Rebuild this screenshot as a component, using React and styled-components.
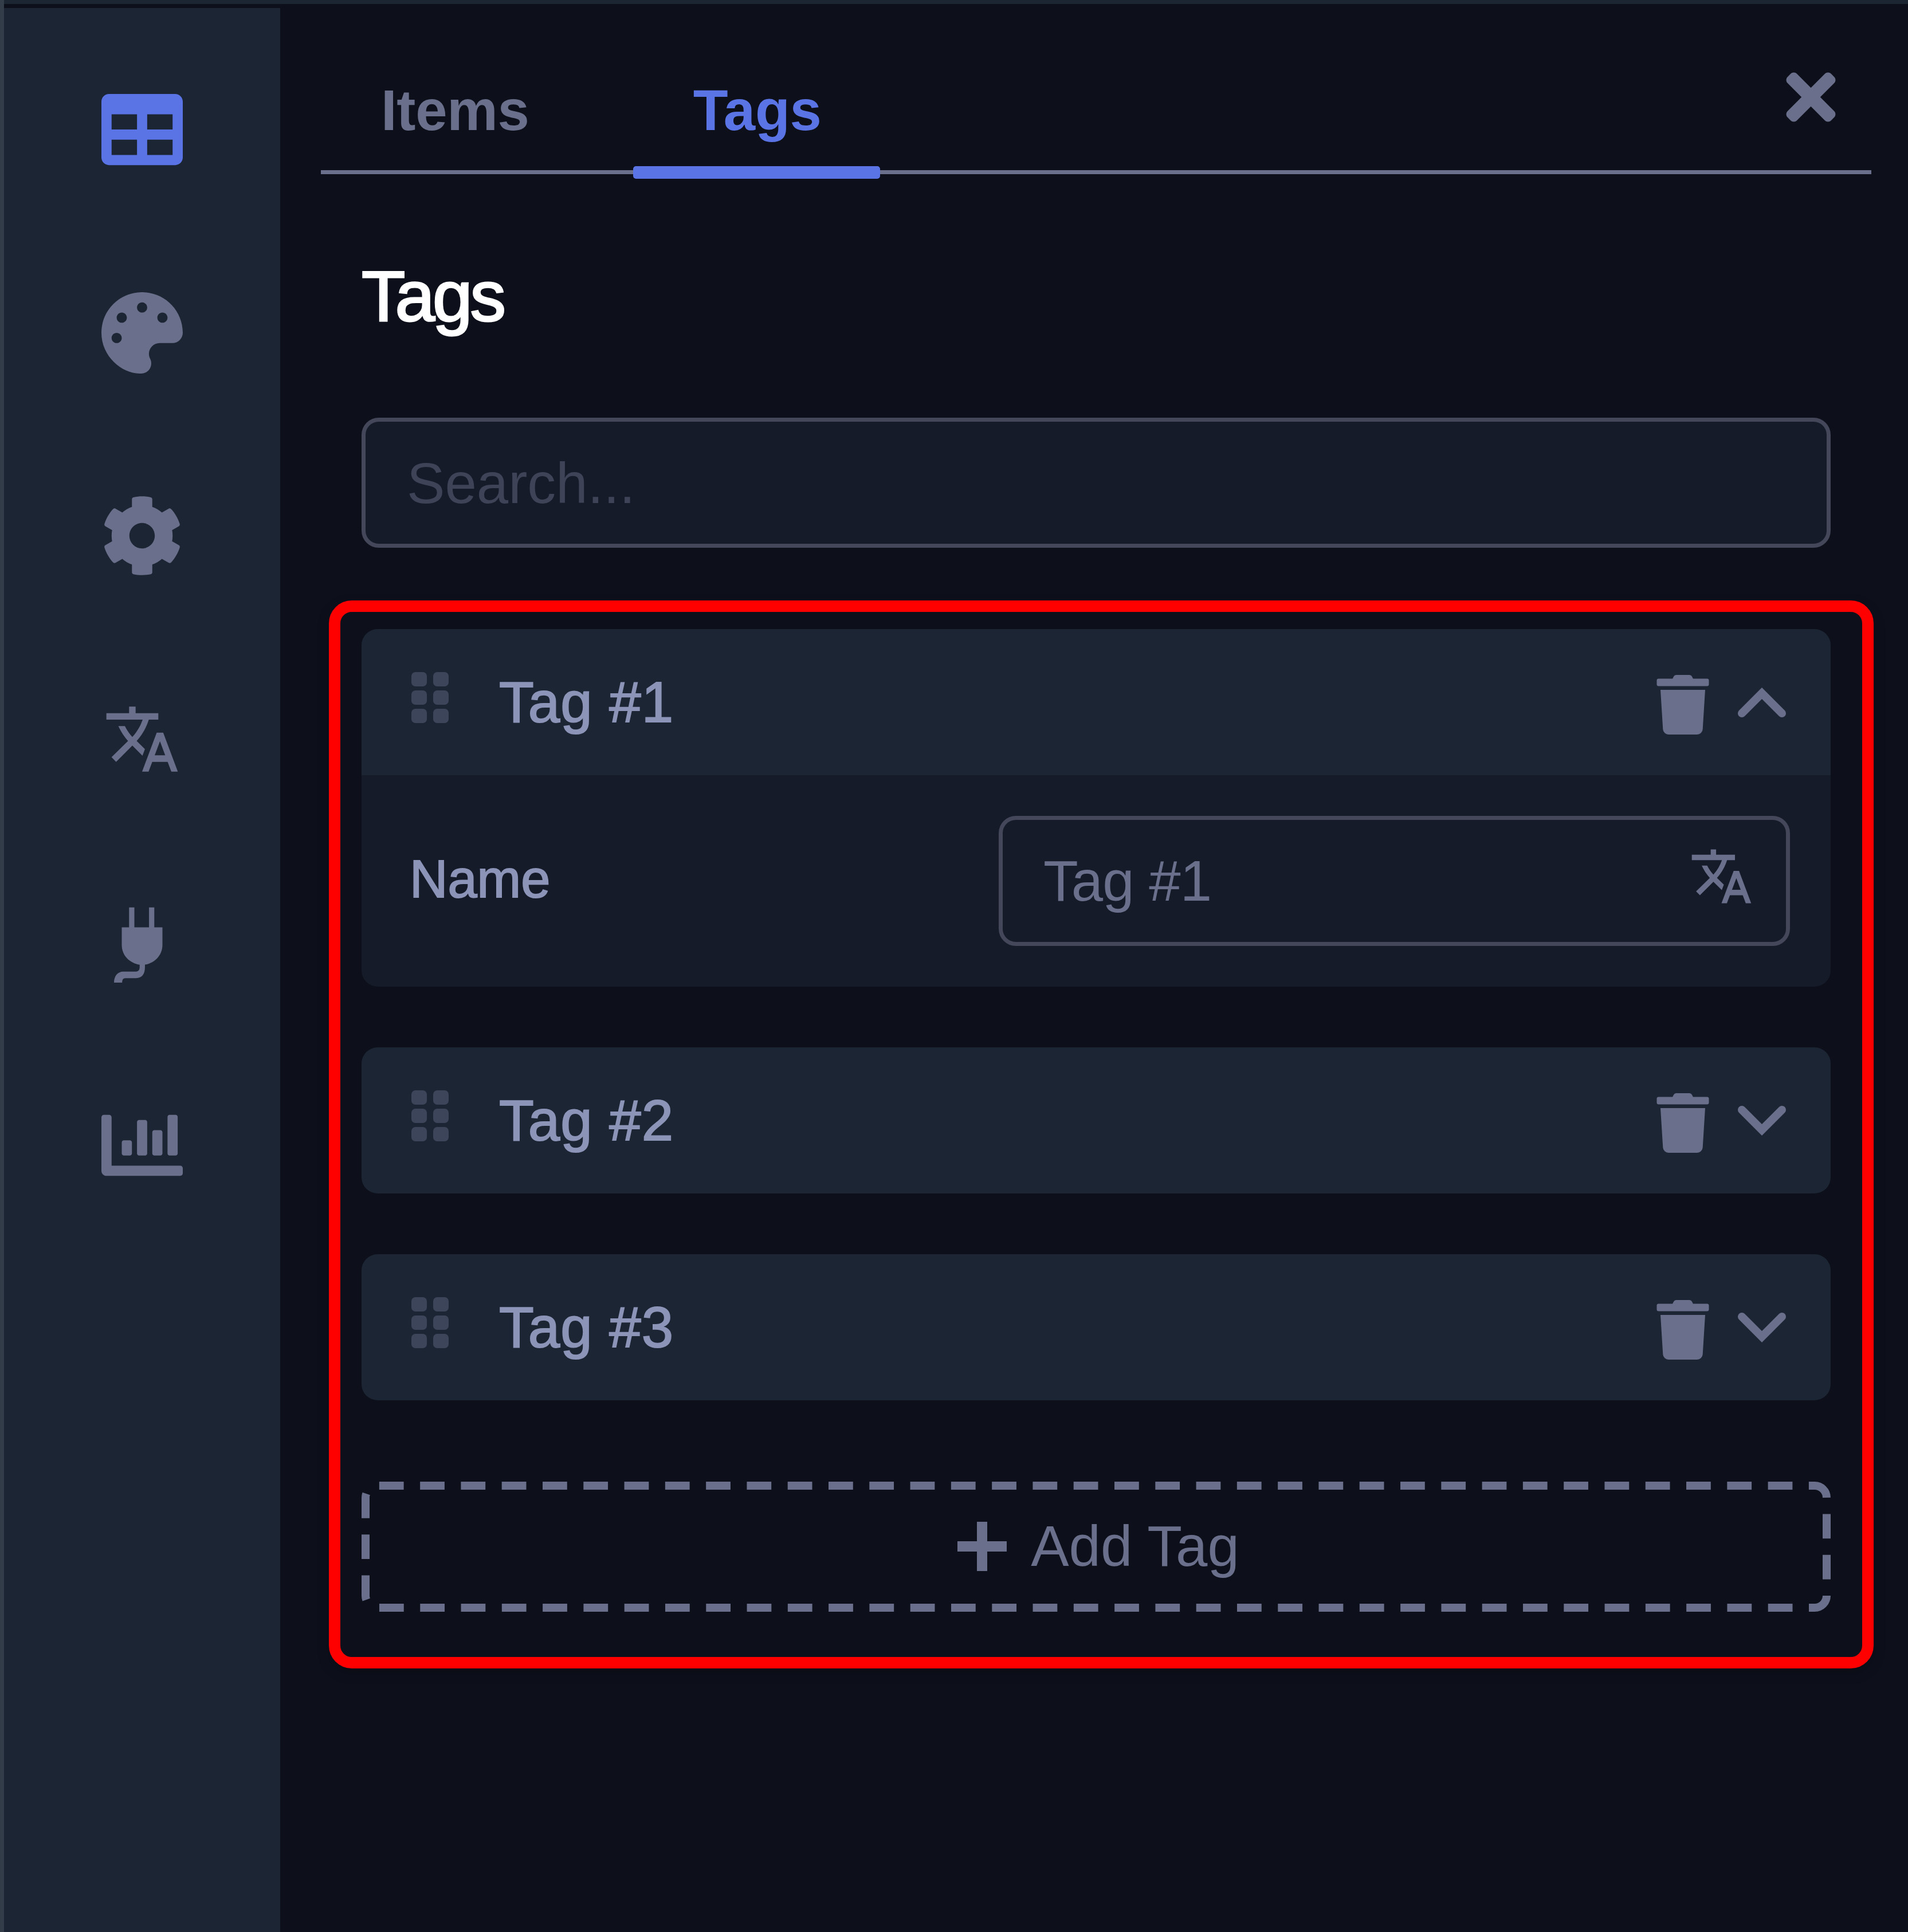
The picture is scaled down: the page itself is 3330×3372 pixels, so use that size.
import { useState } from 'react'
import styled, { createGlobalStyle } from 'styled-components'
import {
	FaTable,
	FaPalette,
	FaCog,
	FaChartBar,
	FaTimes,
	FaTrash,
} from 'react-icons/fa'
import { MdTranslate } from 'react-icons/md'

const PlugIcon = () => (
	<svg viewBox='0 0 20 20' width='1em' height='1em' fill='currentColor'>
		<path d='M6.8 1.5h1.3v5H6.8zM11.7 1.5h1.3v5h-1.3z' />
		<path d='M5 6.4h10v4.3c0 2.700-2 4.500-4.300 4.900v.6c0 1.700-.7 2.700-2.200 2.700H5.900c-.6 0-.8.4-.8 1.100H3.100c0-1.600.9-2.700 2.300-2.700h2.900c.8 0 1.100-.4 1.100-1.100v-.6C7 15.200 5 13.400 5 10.700z' />
	</svg>
)

const GripIcon = () => (
	<svg viewBox='0 0 66 90' width='66' height='90' fill='currentColor'>
		{[0, 32, 64].map((y) => (
			<g key={y}>
				<rect x='0' y={y} width='27' height='25' rx='7' />
				<rect x='38' y={y} width='27' height='25' rx='7' />
			</g>
		))}
	</svg>
)

const Chevron = ({ up }) => (
	<svg viewBox='0 0 86 57' width='86' height='57' fill='none'>
		<path
			d={up ? 'M8 48L43 13L78 48' : 'M8 10L43 45L78 10'}
			stroke='currentColor'
			strokeWidth='14'
			strokeLinecap='round'
		/>
	</svg>
)

const PlusIcon = () => (
	<svg viewBox='0 0 88 88' width='88' height='88'>
		<path d='M44 1V87M1 44H87' stroke='currentColor' strokeWidth='18' />
	</svg>
)

const navItems = [
	{ id: 'items', icon: <FaTable /> },
	{ id: 'theme', icon: <FaPalette /> },
	{ id: 'settings', icon: <FaCog /> },
	{ id: 'translate', icon: <MdTranslate />, size: 136 },
	{ id: 'plugins', icon: <PlugIcon /> },
	{ id: 'stats', icon: <FaChartBar /> },
]

const App = () => {
	const [tab, setTab] = useState('Tags')
	const [open, setOpen] = useState(1)
	const tags = [1, 2, 3]

	return (
		<Page>
			<GlobalStyle />
			<Sidebar>
				{navItems.map((item) => (
					<NavButton key={item.id} $active={item.id === 'items'} $size={item.size}>
						{item.icon}
					</NavButton>
				))}
			</Sidebar>
			<Main>
				<TabBar>
					{['Items', 'Tags'].map((name) => (
						<Tab key={name} $active={tab === name} onClick={() => setTab(name)}>
							{name}
						</Tab>
					))}
					<CloseButton>
						<FaTimes />
					</CloseButton>
				</TabBar>
				<Title>Tags</Title>
				<Search placeholder='Search...' />
				<Highlight>
					{tags.map((n) => (
						<Card key={n}>
							<CardHeader onClick={() => setOpen(open === n ? 0 : n)}>
								<Grip>
									<GripIcon />
								</Grip>
								<CardTitle>Tag #{n}</CardTitle>
								<Trash />
								<Chevron up={open === n} />
							</CardHeader>
							{open === n && (
								<CardBody>
									<Label>Name</Label>
									<Field>
										<FieldText>Tag #{n}</FieldText>
										<MdTranslate />
									</Field>
								</CardBody>
							)}
						</Card>
					))}
					<AddButton>
						<Dashes viewBox='0 0 2564 227'>
							<rect x='7' y='7' width='2550' height='213' rx='21' pathLength='770' />
						</Dashes>
						<PlusIcon />
						<span>Add Tag</span>
					</AddButton>
				</Highlight>
			</Main>
		</Page>
	)
}

const GlobalStyle = createGlobalStyle`
	* {
		box-sizing: border-box;
	}

	body {
		margin: 0;
		background: #0d101b;
		font-family: 'Liberation Sans', Arial, sans-serif;
	}

	svg {
		display: block;
		flex-shrink: 0;
	}
`

const Page = styled.div`
	width: 3330px;
	height: 3372px;
	overflow: hidden;
	display: flex;
	background: linear-gradient(#1c2633, #1c2633) top / 100% 7px no-repeat #0d101b;
	border-left: 7px solid #333d49;
	font-size: 99.6px;
	color: #6a708c;
`

const Sidebar = styled.div`
	width: 482px;
	margin-top: 14px;
	padding: 141px 0 0 170px;
	display: flex;
	flex-direction: column;
	gap: 212.5px;
	background: #1c2533;
`

const NavButton = styled.div`
	width: 142px;
	height: 142px;
	display: flex;
	align-items: center;
	justify-content: center;
	font-size: ${(props) => props.$size || 142}px;
	color: ${(props) => (props.$active ? '#5a74e6' : '#6a708c')};
`

const Main = styled.div`
	flex: 1;
	padding: 7px 64px 0 71px;
`

const TabBar = styled.div`
	height: 297px;
	display: flex;
	gap: 79px;
	border-bottom: 7px solid #6a708c;
`

const Tab = styled.div`
	position: relative;
	padding: 81px 102px 0 105px;
	display: flex;
	align-items: center;
	font-weight: bold;
	letter-spacing: -0.3px;
	color: ${(props) => (props.$active ? '#5a74e6' : '#6a708c')};
	cursor: pointer;

	&::after {
		content: '';
		display: ${(props) => (props.$active ? 'block' : 'none')};
		position: absolute;
		left: 0;
		right: 0;
		bottom: -15px;
		height: 22px;
		border-radius: 5px;
		background: #5a74e6;
	}
`

const CloseButton = styled.div`
	margin-left: auto;
	padding: 34px 43px 0 0;
	display: flex;
	align-items: center;
	font-size: 125px;
`

const Title = styled.div`
	margin: 144px 71px 141px;
	height: 140px;
	line-height: 138px;
	font-size: 125px;
	color: #fff;
	-webkit-text-stroke: 3px #fff;
	letter-spacing: -4px;
`

const Search = styled.input`
	display: block;
	width: 2564px;
	height: 227px;
	margin-left: 71px;
	padding: 2px 72px 0;
	border: 7px solid #434759;
	border-radius: 30px;
	background: #151b28;
	font: inherit;
	color: #8c94b8;
	outline: none;

	&::placeholder {
		color: #3e4357;
		opacity: 1;
	}
`

const Highlight = styled.div`
	margin: 92px -4px 0 14px;
	height: 1864px;
	padding: 30px 55px 0 37px;
	border: 20px solid #f00;
	border-radius: 40px;
	box-shadow: 0 8px 20px rgba(0, 0, 0, 0.25);
`

const Card = styled.div`
	margin-bottom: 106.5px;
	border-radius: 28px;
	overflow: hidden;
	background: #151b28;
`

const CardHeader = styled.div`
	height: 254.5px;
	padding: 0 77px 0 87px;
	display: flex;
	align-items: center;
	background: #1c2533;
	cursor: pointer;
`

const Grip = styled.div`
	width: 153px;
	margin-top: -15px;
	color: #3c4559;
`

const CardTitle = styled.div`
	flex: 1;
	padding-top: 2px;
	color: #8c94b8;
	letter-spacing: 1px;
	-webkit-text-stroke: 2px #8c94b8;
`

const Trash = styled(FaTrash)`
	margin: 9px 43px 0 0;
	font-size: 104px;
`

const CardBody = styled.div`
	height: 369px;
	padding: 0 71px 0 84px;
	display: flex;
	align-items: center;
	justify-content: space-between;
`

const Label = styled.div`
	margin-top: -6px;
	font-size: 92px;
	color: #8c94b8;
	-webkit-text-stroke: 2px #8c94b8;
`

const Field = styled.div`
	width: 1381px;
	height: 227px;
	padding: 0 56px 0 71px;
	display: flex;
	align-items: center;
	border: 7px solid #434759;
	border-radius: 30px;

	svg {
		margin-top: -16px;
		font-size: 113px;
	}
`

const FieldText = styled.div`
	flex: 1;
	padding-top: 2px;
	letter-spacing: -1px;
`

const AddButton = styled.div`
	position: relative;
	height: 227px;
	margin-top: 142px;
	padding-left: 7px;
	display: flex;
	align-items: center;
	justify-content: center;
	gap: 41px;
	cursor: pointer;
`

const Dashes = styled.svg`
	position: absolute;
	inset: 0;

	rect {
		fill: none;
		stroke: #6a708c;
		stroke-width: 14px;
		stroke-dasharray: 6 4;
		stroke-dashoffset: -0.4;
	}
`

export default App
